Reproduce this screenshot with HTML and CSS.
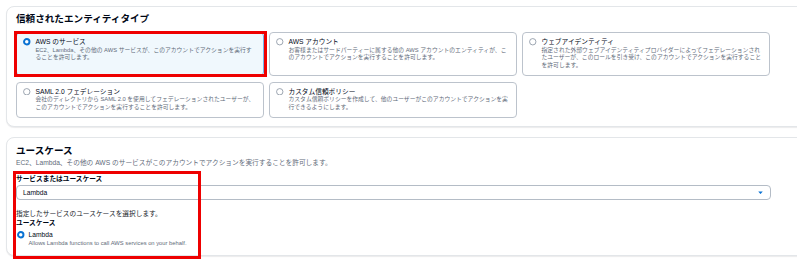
FILE: index.html
```html
<!DOCTYPE html>
<html lang="ja">
<head>
    <meta charset="UTF-8">
    <meta name="viewport" content="width=device-width, initial-scale=1.0">
    <title>信頼されたエンティティを選択</title>
    <link rel="stylesheet" href="styles.css">
</head>
<body>
    <div class="page">
        <section class="panel">
            <h2>信頼されたエンティティタイプ</h2>
            <div class="tiles">
                <div class="tile selected marked">
                    <svg class="radio" viewBox="0 0 8 8"><circle cx="4" cy="4" r="2.9" fill="#fff" stroke="#0972d3" stroke-width="2.1"/></svg>
                    <div>
                        <div class="tile-title">AWS のサービス</div>
                        <div class="tile-desc">EC2、Lambda、その他の AWS サービスが、このアカウントでアクションを実行することを許可します。</div>
                    </div>
                </div>
                <div class="tile">
                    <svg class="radio" viewBox="0 0 8 8"><circle cx="4" cy="4" r="3.4" fill="#fff" stroke="#7d8998" stroke-width="0.8"/></svg>
                    <div>
                        <div class="tile-title">AWS アカウント</div>
                        <div class="tile-desc">お客様またはサードパーティーに属する他の AWS アカウントのエンティティが、このアカウントでアクションを実行することを許可します。</div>
                    </div>
                </div>
                <div class="tile">
                    <svg class="radio" viewBox="0 0 8 8"><circle cx="4" cy="4" r="3.4" fill="#fff" stroke="#7d8998" stroke-width="0.8"/></svg>
                    <div>
                        <div class="tile-title">ウェブアイデンティティ</div>
                        <div class="tile-desc">指定された外部ウェブアイデンティティプロバイダーによってフェデレーションされたユーザーが、このロールを引き受け、このアカウントでアクションを実行することを許可します。</div>
                    </div>
                </div>
                <div class="tile">
                    <svg class="radio" viewBox="0 0 8 8"><circle cx="4" cy="4" r="3.4" fill="#fff" stroke="#7d8998" stroke-width="0.8"/></svg>
                    <div>
                        <div class="tile-title">SAML 2.0 フェデレーション</div>
                        <div class="tile-desc">会社のディレクトリから SAML 2.0 を使用してフェデレーションされたユーザーが、このアカウントでアクションを実行することを許可します。</div>
                    </div>
                </div>
                <div class="tile">
                    <svg class="radio" viewBox="0 0 8 8"><circle cx="4" cy="4" r="3.4" fill="#fff" stroke="#7d8998" stroke-width="0.8"/></svg>
                    <div>
                        <div class="tile-title">カスタム信頼ポリシー</div>
                        <div class="tile-desc">カスタム信頼ポリシーを作成して、他のユーザーがこのアカウントでアクションを実行できるようにします。</div>
                    </div>
                </div>
            </div>
        </section>

        <section class="panel usecase">
            <h2>ユースケース</h2>
            <p class="panel-desc">EC2、Lambda、その他の AWS のサービスがこのアカウントでアクションを実行することを許可します。</p>

            <div class="field-label">サービスまたはユースケース</div>
            <div class="select">
                <span>Lambda</span>
                <svg class="caret" viewBox="0 0 6 4"><path d="M0.3 0.4 H5.7 L3 3.6 Z" fill="#0972d3"/></svg>
            </div>

            <p class="hint">指定したサービスのユースケースを選択します。</p>
            <div class="field-label tight">ユースケース</div>
            <div class="option">
                <svg class="radio" viewBox="0 0 8 8"><circle cx="4" cy="4" r="2.9" fill="#fff" stroke="#0972d3" stroke-width="2.1"/></svg>
                <div>
                    <div class="tile-title">Lambda</div>
                    <div class="tile-desc">Allows Lambda functions to call AWS services on your behalf.</div>
                </div>
            </div>

            <div class="mark-box"></div>
        </section>
    </div>
</body>
</html>
```

FILE: styles.css
```css
html, body { margin: 0; overflow: hidden; background: #fff; }
body { font-family: "Liberation Sans", "Noto Sans CJK JP", sans-serif; color: #000716; }
.page { width: 820px; padding: 6px 0 0 6px; }

.panel { position: relative; background: #fff; border: 1px solid #e3e6e9; border-radius: 8px; box-shadow: 0 1px 1px rgba(0, 7, 22, 0.08); padding: 6px 9px 8px; margin-bottom: 10px; }
.panel h2 { margin: 0 0 7px; font-size: 9.6px; line-height: 12px; font-weight: 700; }

.tiles { display: grid; grid-template-columns: repeat(3, 248px); column-gap: 5px; row-gap: 6px; }
.tile { position: relative; display: flex; gap: 5px; align-items: flex-start; border: 1px solid #bcc3cc; border-radius: 4px; padding: 4px 6px 5px; }
.tile.selected { background: #f0f8fd; border-color: #74b4ea; }
.tile.marked::after { content: ""; position: absolute; left: -3px; right: -4px; top: -2px; bottom: -2px; border: 3px solid #ee0000; }

.radio { width: 7.5px; height: 7.5px; flex: none; margin-top: 1px; }
.tile-title { font-size: 6.7px; line-height: 9.6px; }
.tile-desc { font-size: 5.8px; line-height: 7.7px; color: #5f6b7a; }

.usecase { padding-top: 7px; }
.usecase h2 { margin-bottom: 1px; }
.panel-desc { margin: 0; font-size: 6.7px; line-height: 9.6px; color: #5f6b7a; }
.field-label { margin-top: 7px; font-size: 6.7px; line-height: 9.6px; font-weight: 700; }
.field-label.tight { margin-top: 0; }

.select { display: flex; align-items: center; justify-content: space-between; width: 755px; height: 15px; box-sizing: border-box; margin-top: 1px; padding: 0 7px 0 6px; border: 1px solid #b4bcc6; border-radius: 4px; font-size: 6.7px; }
.caret { width: 5px; height: 3.5px; }

.hint { margin: 9px 0 0; font-size: 6.7px; line-height: 9.6px; color: #16191f; }
.option { display: flex; gap: 4px; margin-top: 2px; padding-left: 1px; }

.mark-box { position: absolute; left: 6px; top: 33px; width: 188px; height: 88px; box-sizing: border-box; border: 3px solid #ee0000; }
```
